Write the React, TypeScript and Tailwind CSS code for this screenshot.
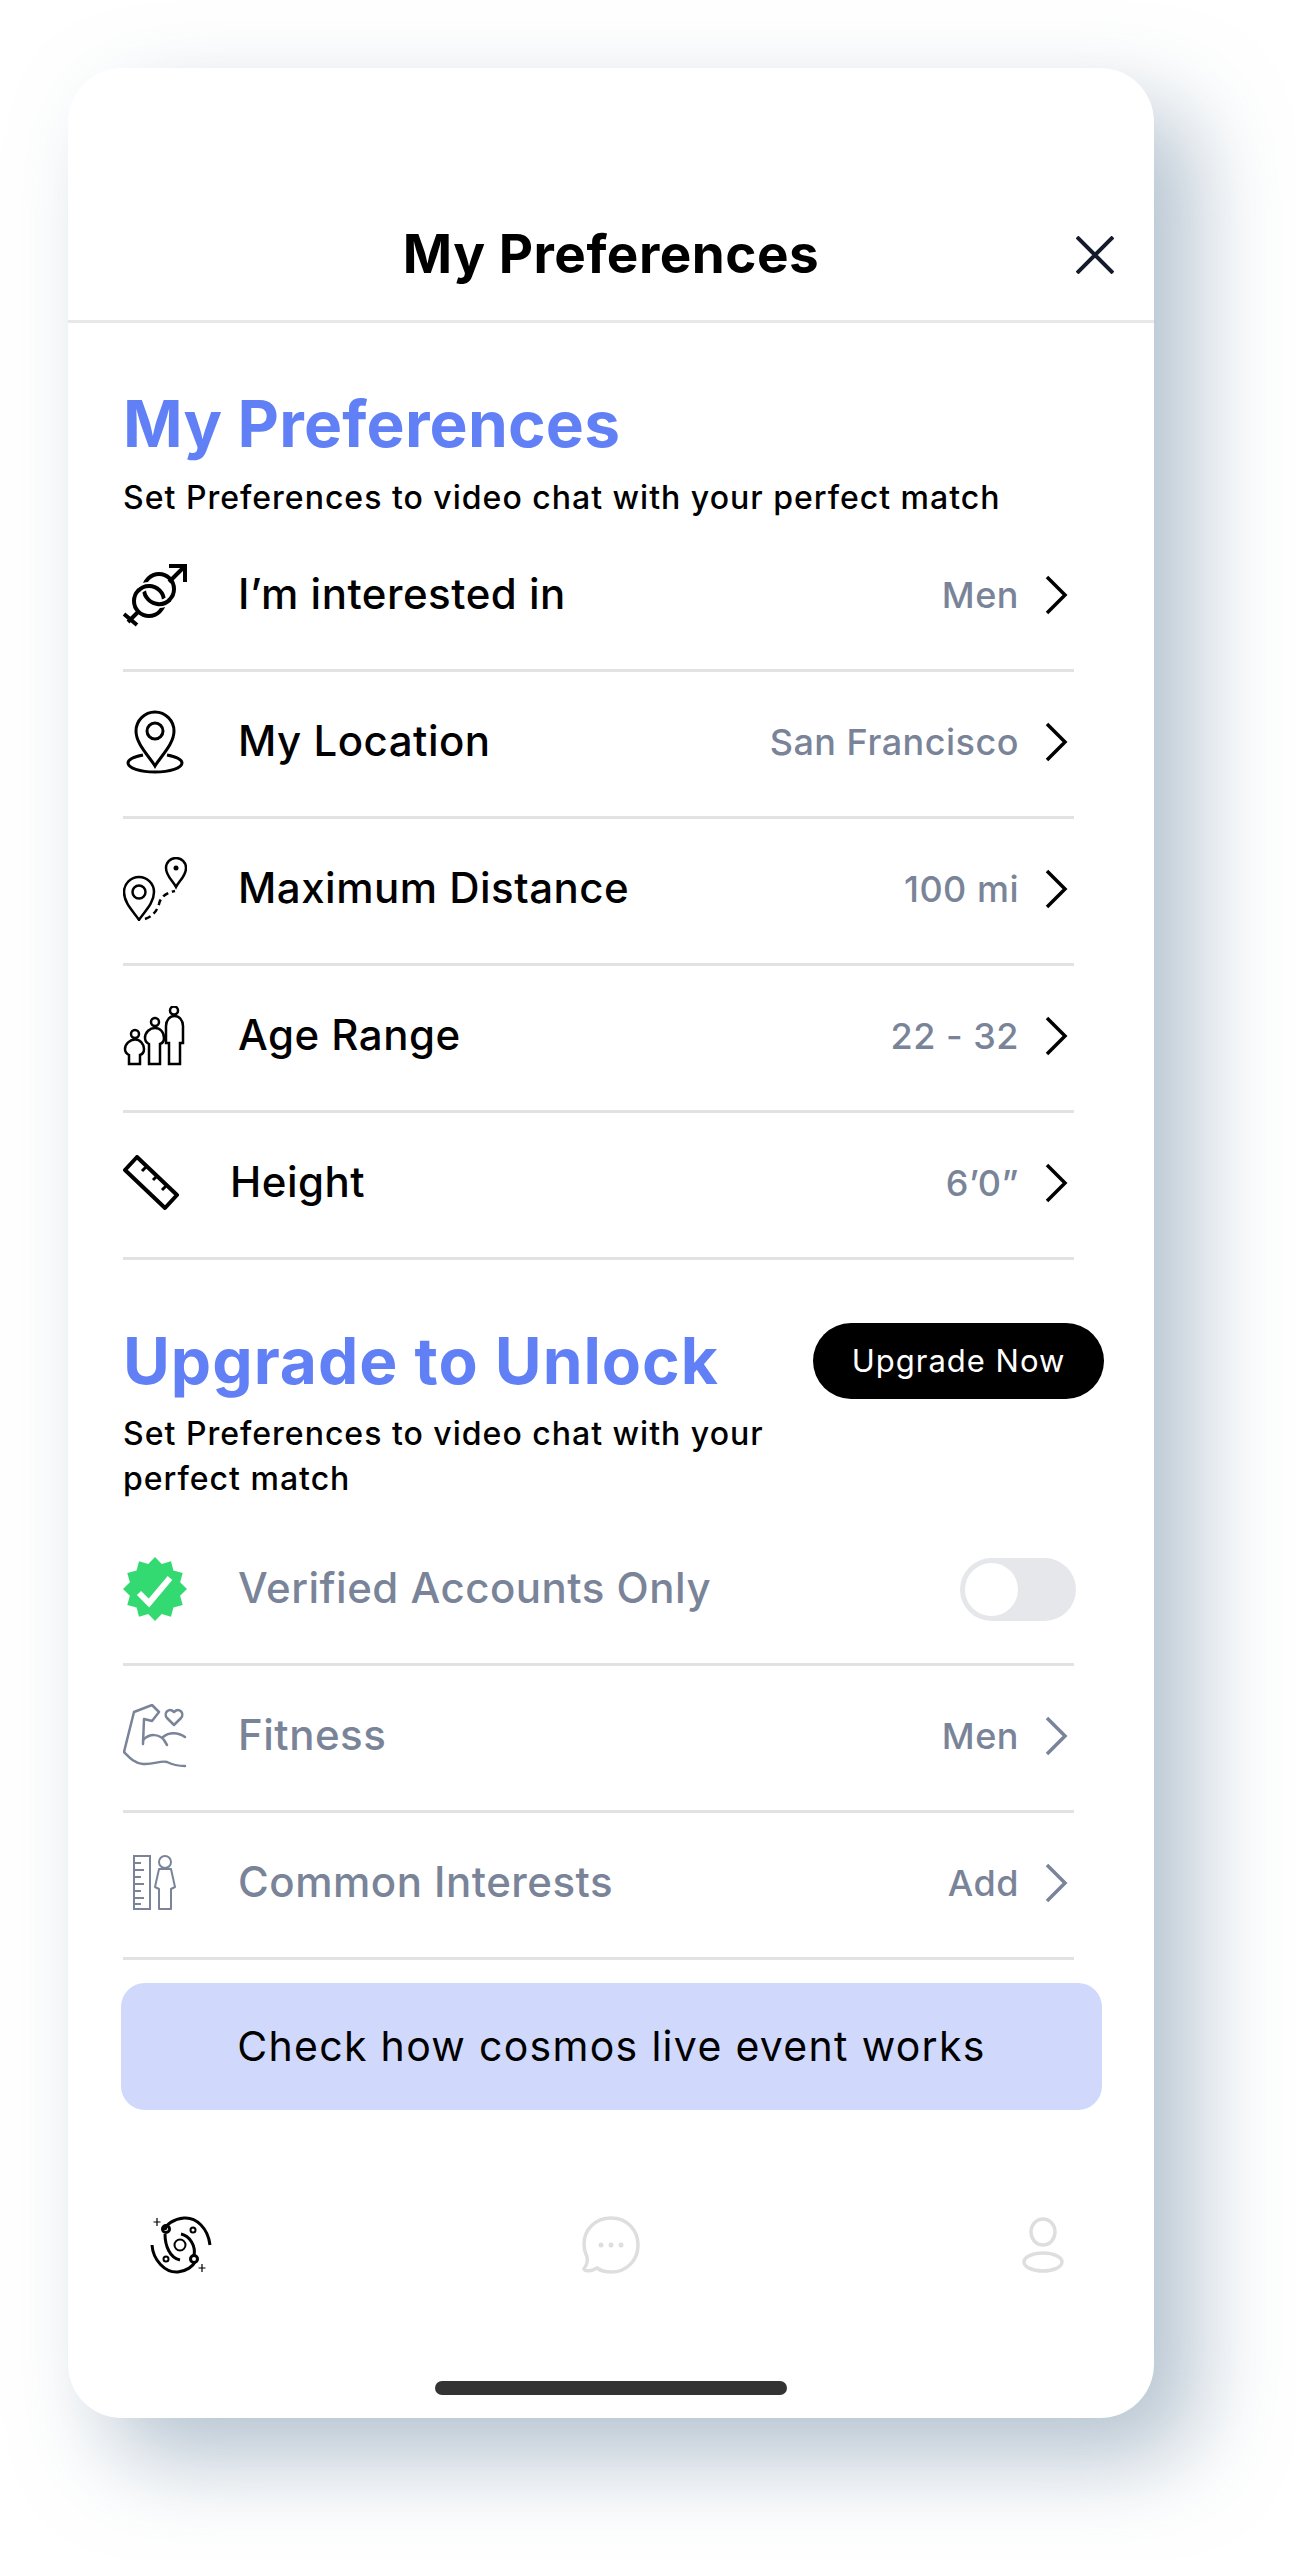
import type { ReactNode } from 'react';

const badgePoints = Array.from({ length: 24 }, (_, i) => {
  const r = i % 2 === 0 ? 32 : 26;
  const a = (i * Math.PI) / 12;
  return `${32 + r * Math.cos(a)},${32 + r * Math.sin(a)}`;
}).join(' ');

function GenderIcon() {
  return (
    <svg width="64" height="64" viewBox="0 0 64 64" fill="none" stroke="#000" strokeWidth="4">
      <path d="M46 3 H62 V19 M62 3 L46 19" />
      <circle cx="36" cy="26" r="15" />
      <circle cx="26" cy="38" r="15" />
      <path d="M45.8 37.3 A15 15 0 0 1 35.2 41" stroke="#fff" strokeWidth="8" />
      <path d="M47 36.5 A15 15 0 0 1 34 41" />
      <path d="M16.2 26.7 A15 15 0 0 1 26.8 23" stroke="#fff" strokeWidth="8" />
      <path d="M15 28 A15 15 0 0 1 28 23" />
      <path d="M16 48 L5 59 M1 51 L14 62" />
    </svg>
  );
}

function LocationIcon() {
  return (
    <svg width="64" height="64" viewBox="0 0 64 64" fill="none" stroke="#000" strokeWidth="3">
      <path d="M32 56 C26 46 13 34 13 21 A19 19 0 0 1 51 21 C51 34 38 46 32 56 Z" />
      <circle cx="32" cy="21" r="8" />
      <path d="M20 45 C10 47 5 50 5 53 C5 58 17 62 32 62 C47 62 59 58 59 53 C59 50 54 47 44 45" />
    </svg>
  );
}

function DistanceIcon() {
  return (
    <svg width="64" height="64" viewBox="0 0 64 64" fill="none" stroke="#000" strokeWidth="2.5">
      <path d="M16 63 C12 56 1 47 1 35 A15 15 0 0 1 31 35 C31 47 20 56 16 63 Z" />
      <circle cx="16" cy="35" r="6.5" />
      <path d="M53 30 C50 24 43 19 43 11 A10 10 0 0 1 63 11 C63 19 56 24 53 30 Z" />
      <circle cx="53" cy="11" r="2.5" fill="#000" stroke="none" />
      <path d="M22 62 Q33 58 36 47 Q38 37 52 34" strokeDasharray="6 4" />
    </svg>
  );
}

function FamilyIcon() {
  return (
    <svg width="64" height="60" viewBox="0 0 64 60" fill="none" stroke="#000" strokeWidth="2.5">
      <circle cx="12" cy="28" r="4" />
      <circle cx="32" cy="16" r="4" />
      <circle cx="51" cy="4.5" r="4" />
      <path d="M46 58 H57 V37 H60 V20 C60 14 56 10 51.5 10 C47 10 43 14 43 20 V37 H46 Z" />
      <path d="M26 58 H37 V38 C40 37 41 35 41 32 C41 26 37 22 32 22 C27 22 22 26 22 32 C22 35 24 37 26 38 Z" />
      <path d="M6 58 H17 V49 C20 48 21 46 21 43 C21 38 17 33.5 12 33.5 C7 33.5 2 38 2 43 C2 46 4 48 6 49 Z" />
    </svg>
  );
}

function RulerIcon() {
  return (
    <svg width="64" height="56" viewBox="0 0 64 56" fill="none" stroke="#000" strokeWidth="4" strokeLinejoin="round">
      <path d="M2 15 L14 2 L54 40 L42 53 Z" />
      <path d="M24 11 L19 16 M34 21 L30 25 M44 30 L39 35" strokeWidth="3" />
    </svg>
  );
}

function BadgeIcon() {
  return (
    <svg width="64" height="64" viewBox="0 0 64 64">
      <polygon points={badgePoints} fill="#33d971" />
      <path d="M16 36 L26 46 L47 21" fill="none" stroke="#fff" strokeWidth="6" />
    </svg>
  );
}

function FitnessIcon() {
  return (
    <svg width="64" height="64" viewBox="0 0 64 64" fill="none" stroke="#7a8499" strokeWidth="2.5" strokeLinejoin="round" strokeLinecap="round">
      <path d="M1 48 L11 8 L29 1 L36 8 L29 17 L21 15 L20 40" />
      <path d="M1 48 C6 53 11 59 20 60 C30 61 38 56 44 58 C50 61 56 62 62 62" />
      <path d="M20 36 C27 29 36 30 41 36 L44 41 M40 33 C46 28 55 28 62 33" />
      <path d="M51 21 L44 14 C40 9 46 3 51 8 C56 3 62 9 58 14 Z" />
    </svg>
  );
}

function InterestsIcon() {
  return (
    <svg width="44" height="56" viewBox="0 0 44 56" fill="none" stroke="#7a8499" strokeWidth="2">
      <rect x="1" y="1" width="16" height="53" />
      <path d="M1 8 H8 M1 15 H11 M1 22 H8 M1 29 H11 M1 36 H8 M1 43 H11 M1 49 H8" />
      <circle cx="32" cy="7" r="6" />
      <path d="M26 14 H38 L42 32 L38 34 V54 H26 V34 L22 32 Z" strokeLinejoin="round" />
    </svg>
  );
}

function Chevron({ grey }: { grey?: boolean }) {
  return (
    <svg width="24" height="40" viewBox="0 0 24 40" fill="none" stroke={grey ? '#7a8499' : '#000'} strokeWidth="3.5">
      <path d="M3 2 L21 20 L3 38" />
    </svg>
  );
}

function GalaxyIcon() {
  return (
    <svg width="62" height="58" viewBox="0 0 62 58" fill="none" stroke="#000" strokeWidth="3">
      <path d="M60 29 C58 12 46 1 34 2 C24 3 16 8 15 14" />
      <path d="M2 29 C3 44 15 57 28 56 C37 55 43 50 45 46" />
      <path d="M30 44 C20 42 15 30 15 18" />
      <path d="M31 18 C40 20 46 30 44 40" />
      <circle cx="30" cy="29" r="5.5" strokeWidth="2" />
      <circle cx="16" cy="13" r="3.5" />
      <circle cx="44" cy="43" r="3.5" />
      <circle cx="43" cy="14" r="2.5" strokeWidth="2" />
      <circle cx="16" cy="43" r="2.5" strokeWidth="2" />
      <path d="M7 2 V10 M3.5 6 H10.5 M52 48 V56 M48.5 52 H55.5" strokeWidth="1.2" />
    </svg>
  );
}

function ChatIcon() {
  return (
    <svg width="58" height="58" viewBox="0 0 58 58" fill="none" stroke="#dedede" strokeWidth="3.5">
      <path d="M29 2 C13 2 2 14 2 28 C2 33 3 37 5 41 C6 45 4 50 2 53 C3 56 10 55 15 52 C19 55 24 56 29 56 C45 56 56 44 56 29 C56 14 45 2 29 2 Z" />
      <circle cx="19" cy="29" r="2.5" fill="#dedede" stroke="none" />
      <circle cx="29" cy="29" r="2.5" fill="#dedede" stroke="none" />
      <circle cx="39" cy="29" r="2.5" fill="#dedede" stroke="none" />
    </svg>
  );
}

function UserIcon() {
  return (
    <svg width="42" height="56" viewBox="0 0 42 56" fill="none" stroke="#dedede" strokeWidth="3.5">
      <ellipse cx="21" cy="15" rx="12" ry="13" />
      <ellipse cx="21" cy="45" rx="19" ry="9" />
    </svg>
  );
}

function Row({ icon, label, value, grey, labelClass, trailing }: {
  icon: ReactNode;
  label: string;
  value?: string;
  grey?: boolean;
  labelClass?: string;
  trailing?: ReactNode;
}) {
  return (
    <div className="mr-[30px] flex h-[147px] items-center border-b-[3px] border-[#e2e2e2] pb-[4px] pr-[6px]">
      <div className="flex w-[64px] shrink-0 justify-center">{icon}</div>
      <span className={`pb-[3px] text-[42px] font-medium tracking-[0.5px] ${grey ? 'text-[#7a8499]' : 'text-black'} ${labelClass ?? 'ml-[51px]'}`}>
        {label}
      </span>
      <div className="ml-auto flex items-center">
        {trailing ?? (
          <>
            <span className="text-[36px] font-medium tracking-[0.5px] text-[#7a8499]">{value}</span>
            <span className="ml-[25px] flex"><Chevron grey={grey} /></span>
          </>
        )}
      </div>
    </div>
  );
}

export default function App() {
  return (
    <div className="min-h-[2560px] bg-white pl-[68px] pt-[68px] font-['Inter','Liberation_Sans',sans-serif]">
      <div className="h-[2350px] w-[1086px] rounded-[54px] bg-white shadow-[40px_40px_90px_rgba(150,170,188,0.72)]">
        {/* Header */}
        <div className="grid h-[255px] grid-cols-[1fr_auto_1fr] items-center border-b-[3px] border-[#e8e8e8] pt-[122px]">
          <div />
          <h1 className="text-[53px] font-bold tracking-[0.5px] text-black">My Preferences</h1>
          <div className="flex justify-end pr-[40px]">
            <svg width="38" height="38" viewBox="0 0 38 38" fill="none" stroke="#141c2c" strokeWidth="4">
              <path d="M1 1 L37 37 M37 1 L1 37" />
            </svg>
          </div>
        </div>

        <div className="pl-[55px] pr-[50px]">
          <h2 className="mt-[61px] text-[64px] font-bold leading-[80px] tracking-[0.2px] text-[#6280f5]">My Preferences</h2>
          <p className="mt-[12px] text-[32px] font-medium leading-[44px] tracking-[1px] text-black">
            Set Preferences to video chat with your perfect match
          </p>
          <div className="mt-[5px]">
            <Row icon={<GenderIcon />} label="I’m interested in" value="Men" />
            <Row icon={<LocationIcon />} label="My Location" value="San Francisco" />
            <Row icon={<DistanceIcon />} label="Maximum Distance" value="100 mi" />
            <Row icon={<FamilyIcon />} label="Age Range" value="22 - 32" />
            <Row icon={<RulerIcon />} label="Height" value="6’0”" labelClass="ml-[43px]" />
          </div>

          <div className="mt-[63px] flex h-[76px] items-center justify-between">
            <h2 className="text-[64px] font-bold leading-[76px] tracking-[1px] text-[#6280f5]">Upgrade to Unlock</h2>
            <button className="flex h-[76px] w-[291px] items-center justify-center rounded-full bg-black text-[31px] tracking-[1px] text-white">
              Upgrade Now
            </button>
          </div>
          <p className="mt-[12px] text-[32px] font-medium leading-[45px] tracking-[1px] text-black">
            Set Preferences to video chat with your<br />perfect match
          </p>
          <div className="mt-[18px]">
            <Row
              icon={<BadgeIcon />}
              label="Verified Accounts Only"
              grey
              trailing={
                <div className="-mr-[8px] flex h-[63px] w-[116px] items-center rounded-full bg-[#e5e7eb] p-[5px]">
                  <div className="h-[53px] w-[53px] rounded-full bg-white" />
                </div>
              }
            />
            <Row icon={<FitnessIcon />} label="Fitness" value="Men" grey />
            <Row icon={<InterestsIcon />} label="Common Interests" value="Add" grey />
          </div>

          <div className="-ml-[2px] mt-[23px] flex h-[127px] w-[981px] items-center justify-center rounded-[24px] bg-[#d0d9fc] text-[41px] tracking-[1.3px] text-black">
            Check how cosmos live event works
          </div>
        </div>

        {/* Bottom nav */}
        <div className="mt-[106px] flex items-center justify-between pl-[82px] pr-[90px]">
          <GalaxyIcon />
          <ChatIcon />
          <div className="flex w-[54px] justify-end"><UserIcon /></div>
        </div>
        <div className="mx-auto mt-[107px] h-[14px] w-[352px] rounded-full bg-[#333333]" />
      </div>
    </div>
  );
}
